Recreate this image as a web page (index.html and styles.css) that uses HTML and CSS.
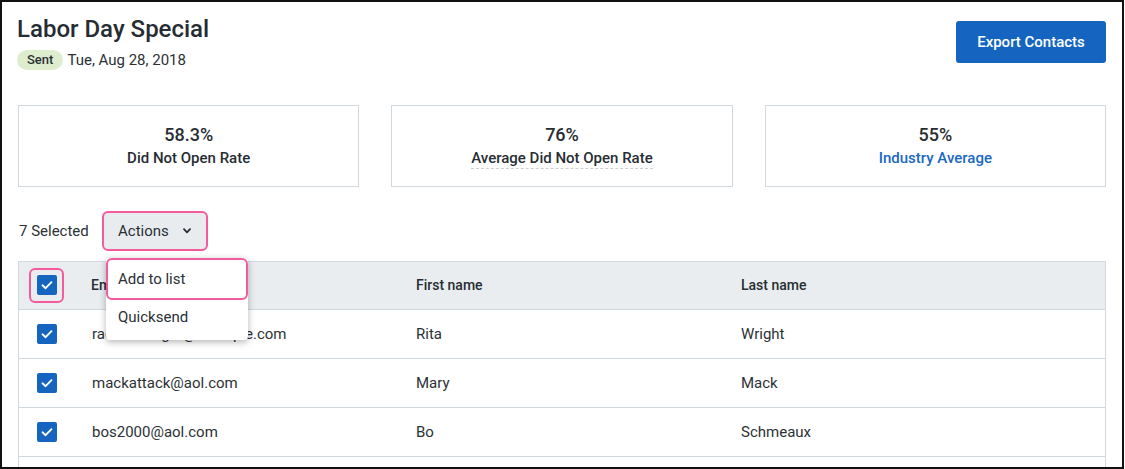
FILE: index.html
```html
<!DOCTYPE html>
<html>
<head>
<meta charset="utf-8">
<link rel="stylesheet" href="styles.css">
</head>
<body>
<div class="frame">
  <header class="top">
    <div class="title-block">
      <h1 class="title">Labor Day Special</h1>
      <div class="meta">
        <span class="badge">Sent</span>
        <span class="date">Tue, Aug 28, 2018</span>
      </div>
    </div>
    <button class="btn-primary">Export Contacts</button>
  </header>

  <section class="stats">
    <div class="stat">
      <div class="stat-num">58.3%</div>
      <div class="stat-label">Did Not Open Rate</div>
    </div>
    <div class="stat">
      <div class="stat-num">76%</div>
      <div class="stat-label dotted">Average Did Not Open Rate</div>
    </div>
    <div class="stat">
      <div class="stat-num">55%</div>
      <div class="stat-label link">Industry Average</div>
    </div>
  </section>

  <div class="toolbar">
    <span class="selected">7 Selected</span>
    <div class="actions-wrap">
      <button class="actions-btn">Actions
        <svg class="chev" width="8" height="6" viewBox="0 0 8 6"><path d="M1 1.2 L4 4.4 L7 1.2" fill="none" stroke="#2a3036" stroke-width="1.8" stroke-linecap="round" stroke-linejoin="round"/></svg>
      </button>
      <div class="menu">
        <div class="menu-item active">Add to list</div>
        <div class="menu-item">Quicksend</div>
      </div>
    </div>
  </div>

  <div class="table">
    <div class="row head">
      <div class="cell check-cell"><span class="check-ring"><span class="cb"><svg width="20" height="20" viewBox="0 0 20 20"><path d="M5.5 10.3 L8.6 13.2 L14.5 7.2" fill="none" stroke="#fff" stroke-width="1.9" stroke-linecap="round" stroke-linejoin="round"/></svg></span></span></div>
      <div class="cell">Email</div>
      <div class="cell">First name</div>
      <div class="cell">Last name</div>
    </div>
    <div class="row">
      <div class="cell check-cell"><span class="cb"><svg width="20" height="20" viewBox="0 0 20 20"><path d="M5.5 10.3 L8.6 13.2 L14.5 7.2" fill="none" stroke="#fff" stroke-width="1.9" stroke-linecap="round" stroke-linejoin="round"/></svg></span></div>
      <div class="cell email">racheldwright@example.com</div>
      <div class="cell">Rita</div>
      <div class="cell">Wright</div>
    </div>
    <div class="row">
      <div class="cell check-cell"><span class="cb"><svg width="20" height="20" viewBox="0 0 20 20"><path d="M5.5 10.3 L8.6 13.2 L14.5 7.2" fill="none" stroke="#fff" stroke-width="1.9" stroke-linecap="round" stroke-linejoin="round"/></svg></span></div>
      <div class="cell email">mackattack@aol.com</div>
      <div class="cell">Mary</div>
      <div class="cell">Mack</div>
    </div>
    <div class="row">
      <div class="cell check-cell"><span class="cb"><svg width="20" height="20" viewBox="0 0 20 20"><path d="M5.5 10.3 L8.6 13.2 L14.5 7.2" fill="none" stroke="#fff" stroke-width="1.9" stroke-linecap="round" stroke-linejoin="round"/></svg></span></div>
      <div class="cell email">bos2000@aol.com</div>
      <div class="cell">Bo</div>
      <div class="cell">Schmeaux</div>
    </div>
    <div class="row"></div>
  </div>
</div>
</body>
</html>
```

FILE: styles.css
```css
* { box-sizing: border-box; }
html, body { margin: 0; padding: 0; background: #fff; }
body {
  font-family: Roboto, "Liberation Sans", Arial, sans-serif;
  color: #272d33;
}
.frame {
  width: 1124px;
  height: 469px;
  border: 2px solid #111;
  overflow: hidden;
  padding: 13px 16px 0 16px;
}
.top {
  display: flex;
  justify-content: space-between;
  align-items: flex-start;
}
.title {
  margin: 0 0 0 -1px;
  font-size: 24px;
  line-height: 28px;
  font-weight: 500;
  color: #262c32;
}
.meta {
  display: flex;
  align-items: center;
  margin-top: 7px;
  gap: 4px;
  margin-left: -1px;
}
.badge {
  display: inline-block;
  height: 20px;
  line-height: 20px;
  padding: 0 10px;
  border-radius: 10px;
  background: #dfedcf;
  font-size: 13px;
  font-weight: 500;
  color: #2b3135;
}
.date {
  font-size: 15px;
  color: #2b3135;
}
.btn-primary {
  margin-top: 6px;
  width: 150px;
  height: 42px;
  border: 0;
  border-radius: 3px;
  background: #1565c0;
  color: #fff;
  font-family: inherit;
  font-size: 15px;
  font-weight: 500;
  padding: 0;
}
.stats {
  display: grid;
  grid-template-columns: 1fr 1fr 1fr;
  gap: 32px;
  margin-top: 35px;
}
.stat {
  height: 82px;
  border: 1px solid #d1d9de;
  display: flex;
  flex-direction: column;
  align-items: center;
  padding-top: 18px;
}
.stat-num {
  font-size: 18px;
  line-height: 22px;
  font-weight: 500;
  color: #272d33;
}
.stat-label {
  margin-top: 3px;
  font-size: 15px;
  line-height: 18px;
  font-weight: 500;
  color: #272d33;
}
.stat-label.dotted {
  border-bottom: 1px dashed #c9d0d5;
  padding-bottom: 1px;
}
.stat-label.link { color: #1a68c2; }

.toolbar {
  display: flex;
  align-items: center;
  margin-top: 23px;
  height: 41px;
}
.selected {
  font-size: 15px;
  color: #2b3135;
  margin-left: 1px;
  width: 83px;
}
.actions-wrap { position: relative; }
.actions-btn {
  display: flex;
  align-items: center;
  height: 40px;
  width: 106px;
  padding: 0 0 0 14px;
  border: 2px solid #f45b9d;
  border-radius: 6px;
  background: #e9ecef;
  font-family: inherit;
  font-size: 15px;
  color: #2a3036;
}
.chev { margin-left: 14px; margin-top: 1px; }
.menu {
  position: absolute;
  top: 47px;
  left: 4px;
  width: 142px;
  background: #fff;
  border-radius: 4px;
  box-shadow: 0 2px 7px rgba(0,0,0,0.3);
  padding-bottom: 6px;
  z-index: 5;
}
.menu-item {
  height: 34px;
  display: flex;
  align-items: center;
  padding-left: 10px;
  font-size: 15px;
  color: #2a3036;
  border: 2px solid transparent;
}
.menu-item.active {
  height: 42px;
  border-color: #f45b9d;
  border-radius: 6px;
  padding-left: 10px;
}

.table {
  margin-top: 10px;
  border: 1px solid #d1d9de;
  border-bottom: 0;
}
.row {
  display: grid;
  grid-template-columns: 72px 325px 325px 1fr;
  height: 49px;
  border-bottom: 1px solid #d1d9de;
  align-items: center;
  font-size: 15px;
  color: #2b3135;
}
.row.head {
  height: 48px;
  background: #e9edf0;
  font-size: 14px;
  font-weight: 500;
  color: #272d33;
  padding-bottom: 1px;
}
.email { padding-left: 1px; }
.check-cell {
  display: flex;
  align-items: center;
  padding-left: 18px;
}
.head .check-cell { padding-left: 10px; }
.check-ring {
  display: flex;
  align-items: center;
  justify-content: center;
  width: 35px;
  height: 35px;
  border: 2px solid #f45b9d;
  border-radius: 6px;
}
.cb {
  display: block;
  width: 20px;
  height: 20px;
  background: #1565c0;
  border-radius: 2px;
}
.cb svg { display: block; }
```
